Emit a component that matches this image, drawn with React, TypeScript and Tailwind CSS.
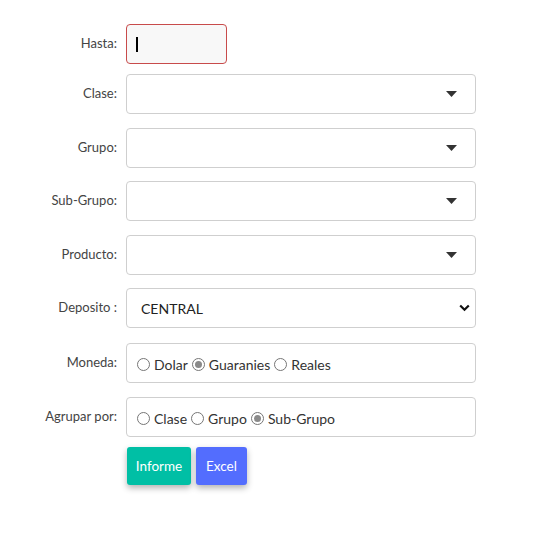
import { useState } from 'react'

const font = { fontFamily: 'Lato, "Noto Sans", sans-serif' }

const Caret = () => (
  <svg width="11" height="6" viewBox="0 0 11 6" className="shrink-0">
    <path d="M0 0 L11 0 L5.5 6 Z" fill="#333" />
  </svg>
)

const Chevron = () => (
  <svg width="11" height="8" viewBox="0 0 11 8" className="shrink-0">
    <path d="M1.2 1.5 L5.5 5.8 L9.8 1.5" fill="none" stroke="#111" strokeWidth="2.2" />
  </svg>
)

const Row = ({ label, children, mb = 'mb-[14px]' }: { label: string; children: React.ReactNode; mb?: string }) => (
  <div className={`flex items-center ${mb}`}>
    <label className="w-[117px] shrink-0 text-right text-[13px] text-[#444]">{label}</label>
    <div className="ml-[9px]">{children}</div>
  </div>
)

const SelectBox = () => (
  <div className="flex h-[40px] w-[350px] items-center justify-end rounded-[4px] border border-[#cfcfcf] bg-white pr-[18px]">
    <Caret />
  </div>
)

const Radio = ({ checked, label, onClick }: { checked: boolean; label: string; onClick: () => void }) => (
  <button type="button" onClick={onClick} className="flex items-center gap-[4px] text-[#333]">
    <span className="flex h-[13px] w-[13px] items-center justify-center rounded-full border border-[#767676] bg-white">
      {checked && <span className="h-[7px] w-[7px] rounded-full bg-[#8a8a8a]" />}
    </span>
    <span>{label}</span>
  </button>
)

const RadioBox = ({ options, value, onChange }: { options: string[]; value: string; onChange: (v: string) => void }) => (
  <div className="flex h-[40px] w-[350px] items-center gap-[4px] rounded-[4px] border border-[#cfcfcf] bg-white pl-[10px] pt-[2px] text-[14px]">
    {options.map((o) => (
      <Radio key={o} label={o} checked={value === o} onClick={() => onChange(o)} />
    ))}
  </div>
)

export default function App() {
  const [moneda, setMoneda] = useState('Guaranies')
  const [agrupar, setAgrupar] = useState('Sub-Grupo')

  return (
    <div className="min-h-[547px] w-[536px] bg-white pt-[24px]" style={font}>
      <Row label="Hasta:" mb="mb-[10px]">
        <div className="flex h-[40px] w-[101px] items-center rounded-[4px] border border-[#c84b4b] bg-[#f8f8f8] pl-[9px]">
          <span className="h-[15px] w-[1.5px] bg-black" />
        </div>
      </Row>
      <Row label="Clase:"><SelectBox /></Row>
      <Row label="Grupo:" mb="mb-[13px]"><SelectBox /></Row>
      <Row label="Sub-Grupo:"><SelectBox /></Row>
      <Row label="Producto:" mb="mb-[13px]"><SelectBox /></Row>
      <Row label="Deposito :" mb="mb-[15px]">
        <div className="flex h-[40px] w-[350px] items-center justify-between rounded-[4px] border border-[#cfcfcf] bg-white pl-[14px] pr-[5px] text-[14px] text-[#222]">
          <span>CENTRAL</span>
          <Chevron />
        </div>
      </Row>
      <Row label="Moneda:">
        <RadioBox options={['Dolar', 'Guaranies', 'Reales']} value={moneda} onChange={setMoneda} />
      </Row>
      <Row label="Agrupar por:" mb="mb-[10px]">
        <RadioBox options={['Clase', 'Grupo', 'Sub-Grupo']} value={agrupar} onChange={setAgrupar} />
      </Row>
      <div className="ml-[127px] flex gap-[5px]">
        <button className="h-[38px] w-[64px] rounded-[3px] bg-[#00bfa5] text-[13.5px] text-white shadow-[0_3px_6px_rgba(0,0,0,0.3)]">
          Informe
        </button>
        <button className="h-[38px] w-[51px] rounded-[3px] bg-[#536dfe] text-[13.5px] text-white shadow-[0_3px_6px_rgba(0,0,0,0.3)]">
          Excel
        </button>
      </div>
    </div>
  )
}
